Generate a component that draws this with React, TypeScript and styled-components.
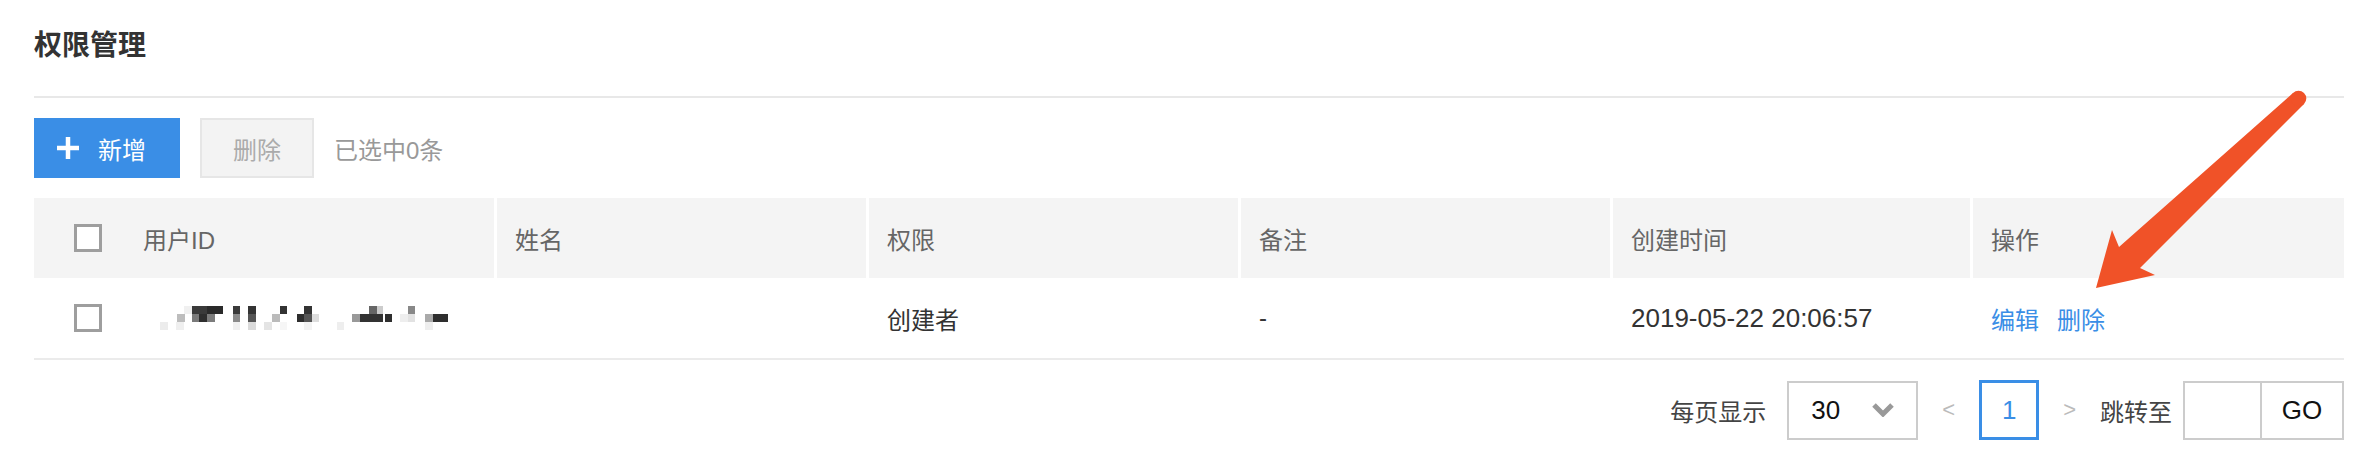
import React from "react";
import styled, { createGlobalStyle } from "styled-components";

const BLUE = "#3a8ee6";

const GlobalStyle = createGlobalStyle`
  html, body {
    margin: 0;
    padding: 0;
    background: #fff;
  }
  body {
    font-family: "Liberation Sans", "Noto Sans CJK SC", sans-serif;
    color: #333;
  }
  * {
    box-sizing: border-box;
  }
`;

const Page = styled.div`
  position: relative;
  width: 2370px;
  height: 462px;
  padding: 0 26px 0 34px;
  overflow: hidden;
`;

const TitleBar = styled.div`
  height: 98px;
  padding-top: 26px;
  border-bottom: 2px solid #e8e8e8;
`;

const Title = styled.h1`
  margin: 0;
  font-size: 28px;
  line-height: 40px;
  font-weight: 600;
  color: #333;
`;

const Toolbar = styled.div`
  display: flex;
  align-items: center;
  gap: 20px;
  height: 60px;
  margin-top: 20px;
`;

const PrimaryButton = styled.button`
  display: flex;
  align-items: center;
  gap: 18px;
  height: 60px;
  padding: 0 34px 0 22px;
  border: none;
  background: ${BLUE};
  color: #fff;
  font-family: inherit;
  font-size: 24px;
`;

const GhostButton = styled.button`
  height: 60px;
  padding: 0 31px;
  border: 2px solid #e6e6e6;
  background: #f3f3f3;
  color: #ababab;
  font-family: inherit;
  font-size: 24px;
`;

const SelectedInfo = styled.span`
  font-size: 24px;
  color: #999;
`;

const Table = styled.div`
  margin-top: 20px;
  width: 2310px;
`;

const Row = styled.div<{ $head?: boolean }>`
  display: grid;
  grid-template-columns: 88px 372px 372px 372px 372px 360px 1fr;
  height: ${(p) => (p.$head ? "80px" : "82px")};
  background: ${(p) => (p.$head ? "#f4f4f4" : "#fff")};
  border-bottom: ${(p) => (p.$head ? "none" : "2px solid #ebebeb")};
`;

const Cell = styled.div<{ $head?: boolean; $sep?: boolean; $num?: boolean }>`
  display: flex;
  align-items: center;
  padding-left: ${(p) => (p.$sep ? "18px" : "21px")};
  border-left: ${(p) => (p.$sep ? "3px solid #fff" : "none")};
  font-size: ${(p) => (p.$num ? "26px" : "24px")};
  color: ${(p) => (p.$head ? "#666" : "#333")};
  white-space: nowrap;
`;

const CheckCell = styled.div`
  display: flex;
  align-items: center;
  padding-left: 40px;
`;

const Checkbox = styled.span`
  display: block;
  width: 28px;
  height: 28px;
  border: 3px solid #9e9e9e;
  background: #fff;
`;

const Mosaic = styled.svg`
  display: block;
  margin-left: 17px;
`;

const ActionLink = styled.a`
  color: ${BLUE};
  font-size: 24px;
  text-decoration: none;
  margin-right: 18px;
`;

const Pagination = styled.div`
  display: flex;
  justify-content: flex-end;
  align-items: center;
  height: 60px;
  margin-top: 20px;
  font-size: 24px;
`;

const PagerLabel = styled.span<{ $gap: number }>`
  color: #444;
  margin-right: ${(p) => p.$gap}px;
`;

const SizeSelect = styled.div`
  display: flex;
  align-items: center;
  justify-content: space-between;
  width: 131px;
  height: 59px;
  padding: 0 22px 0 22px;
  border: 2px solid #ccc;
  color: #111;
  font-size: 26px;
`;

const PageArrow = styled.span`
  color: #bbb;
  font-size: 22px;
  margin: 0 24px;
`;

const PageBox = styled.div`
  display: flex;
  align-items: center;
  justify-content: center;
  width: 60px;
  height: 60px;
  border: 3px solid ${BLUE};
  color: ${BLUE};
  font-size: 26px;
`;

const JumpGroup = styled.div`
  display: flex;
  height: 59px;
  border: 2px solid #ccc;
`;

const JumpInput = styled.div`
  width: 77px;
  border-right: 2px solid #ccc;
`;

const GoButton = styled.div`
  display: flex;
  align-items: center;
  justify-content: center;
  width: 80px;
  color: #111;
  font-size: 26px;
`;

const Annotation = styled.svg`
  position: absolute;
  left: 0;
  top: 0;
  pointer-events: none;
`;

// pixelated (redacted) user id, cells of [x, y, w, h, colour]
const mosaic: [number, number, number, number, string][] = [
  [0, 16, 8, 8, "#ececec"],
  [16, 16, 8, 8, "#efefef"],
  [17, 8, 8, 8, "#bdbdbd"],
  [24, 0, 8, 8, "#f0f0f0"],
  [32, 0, 15, 8, "#3a3a3a"],
  [32, 8, 8, 8, "#7a7a7a"],
  [39, 8, 8, 8, "#2e2e2e"],
  [47, 0, 16, 8, "#2a2a2a"],
  [47, 8, 8, 8, "#7c7c7c"],
  [73, 0, 7, 8, "#3a3a3a"],
  [73, 8, 7, 8, "#8a8a8a"],
  [73, 16, 7, 8, "#f0f0f0"],
  [88, 0, 8, 8, "#333"],
  [88, 8, 8, 8, "#555"],
  [88, 16, 8, 8, "#dadada"],
  [104, 16, 8, 8, "#e4e4e4"],
  [112, 8, 8, 8, "#bbb"],
  [120, 0, 7, 8, "#333"],
  [120, 16, 7, 8, "#f6f6f6"],
  [137, 8, 7, 8, "#2e2e2e"],
  [144, 0, 8, 8, "#333"],
  [144, 8, 8, 8, "#555"],
  [144, 16, 8, 8, "#f3f3f3"],
  [152, 8, 7, 8, "#ddd"],
  [177, 16, 7, 8, "#eee"],
  [192, 8, 8, 8, "#999"],
  [200, 8, 23, 8, "#333"],
  [209, 0, 8, 8, "#666"],
  [217, 0, 6, 8, "#ccc"],
  [225, 8, 7, 8, "#2e2e2e"],
  [240, 8, 8, 8, "#eee"],
  [248, 0, 7, 8, "#888"],
  [248, 8, 7, 8, "#e2e2e2"],
  [265, 8, 8, 8, "#aaa"],
  [265, 16, 8, 8, "#eee"],
  [273, 8, 15, 8, "#2e2e2e"],
];

const columns = ["用户ID", "姓名", "权限", "备注", "创建时间", "操作"];

export default function App() {
  return (
    <Page>
      <GlobalStyle />
      <TitleBar>
        <Title>权限管理</Title>
      </TitleBar>

      <Toolbar>
        <PrimaryButton>
          <svg width="24" height="24" viewBox="0 0 24 24">
            <path d="M12 1v22M1 12h22" stroke="#fff" strokeWidth="4.5" />
          </svg>
          新增
        </PrimaryButton>
        <GhostButton>删除</GhostButton>
        <SelectedInfo>已选中0条</SelectedInfo>
      </Toolbar>

      <Table>
        <Row $head>
          <CheckCell>
            <Checkbox />
          </CheckCell>
          {columns.map((c, i) => (
            <Cell key={c} $head $sep={i > 0}>
              {c}
            </Cell>
          ))}
        </Row>
        <Row>
          <CheckCell>
            <Checkbox />
          </CheckCell>
          <Cell>
            <Mosaic width="290" height="24" viewBox="0 0 290 24">
              {mosaic.map(([x, y, w, h, c], i) => (
                <rect key={i} x={x} y={y} width={w} height={h} fill={c} />
              ))}
            </Mosaic>
          </Cell>
          <Cell />
          <Cell>创建者</Cell>
          <Cell>-</Cell>
          <Cell $num>2019-05-22 20:06:57</Cell>
          <Cell>
            <ActionLink>编辑</ActionLink>
            <ActionLink>删除</ActionLink>
          </Cell>
        </Row>
      </Table>

      <Pagination>
        <PagerLabel $gap={21}>每页显示</PagerLabel>
        <SizeSelect>
          <span>30</span>
          <svg width="22" height="14" viewBox="0 0 22 14">
            <path d="M2 2l9 9 9-9" fill="none" stroke="#999" strokeWidth="5" />
          </svg>
        </SizeSelect>
        <PageArrow>&lt;</PageArrow>
        <PageBox>1</PageBox>
        <PageArrow>&gt;</PageArrow>
        <PagerLabel $gap={11}>跳转至</PagerLabel>
        <JumpGroup>
          <JumpInput />
          <GoButton>GO</GoButton>
        </JumpGroup>
      </Pagination>

      <Annotation width="2370" height="462" viewBox="0 0 2370 462">
        <polygon
          points="2293,93 2304,104 2140,268 2155,275 2096,288 2112,230 2119,247"
          fill="#f05228"
        />
        <circle cx="2298.5" cy="98.5" r="7.8" fill="#f05228" />
      </Annotation>
    </Page>
  );
}
